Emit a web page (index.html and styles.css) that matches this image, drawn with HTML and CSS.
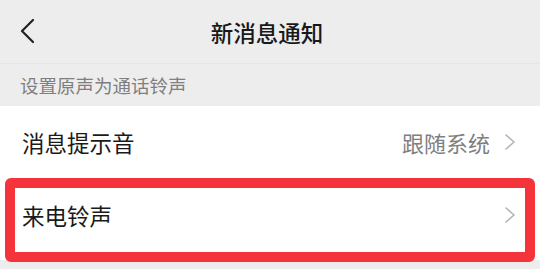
FILE: index.html
```html
<!DOCTYPE html>
<html lang="zh-CN">
<head>
  <meta charset="utf-8" />
  <link rel="stylesheet" href="styles.css">
  <title>新消息通知</title>
</head>
<body>
  <div class="header">
    <svg class="back" width="16" height="26" viewBox="0 0 16 26">
      <polyline points="14,2 3,13 14,24" fill="none" stroke="#222" stroke-width="2.2" stroke-linecap="round" stroke-linejoin="round"/>
    </svg>
    <h1 class="title">新消息通知</h1>
  </div>

  <div class="section-label">设置原声为通话铃声</div>

  <div class="list">
    <div class="row row-first">
      <span class="row-label">消息提示音</span>
      <span class="row-value">跟随系统</span>
      <svg class="arrow" width="12" height="18" viewBox="0 0 12 18">
        <polyline points="2,2 10,9 2,16" fill="none" stroke="#b2b2b2" stroke-width="1.6" stroke-linecap="round" stroke-linejoin="round"/>
      </svg>
    </div>
    <div class="row row-second">
      <span class="row-label">来电铃声</span>
      <svg class="arrow" width="12" height="18" viewBox="0 0 12 18">
        <polyline points="2,2 10,9 2,16" fill="none" stroke="#b2b2b2" stroke-width="1.6" stroke-linecap="round" stroke-linejoin="round"/>
      </svg>
      <div class="highlight"></div>
    </div>
  </div>
</body>
</html>
```

FILE: styles.css
```css
body {
  margin: 0;
  width: 540px;
  height: 269px;
  overflow: hidden;
  background: #ededed;
  font-family: "Noto Sans CJK SC", "Noto Sans", sans-serif;
}
.header {
  position: relative;
  height: 63px;
  display: flex;
  align-items: center;
  justify-content: center;
  border-bottom: 1px solid #e6e6e6;
}
.back {
  position: absolute;
  left: 19px;
  top: 18px;
}
.title {
  margin: 0;
  font-size: 22.5px;
  font-weight: 500;
  color: #191919;
  padding-right: 6px;
}
.section-label {
  height: 42px;
  display: flex;
  align-items: center;
  padding-left: 20px;
  font-size: 18.5px;
  color: #7f7f7f;
}
.list {
  background: #fff;
}
.row {
  position: relative;
  display: flex;
  align-items: center;
  padding: 0 24px 0 22px;
}
.row-first {
  height: 72px;
}
.row-second {
  height: 74px;
  padding-bottom: 8px;
}
.row-label {
  flex: 1;
  font-size: 22.5px;
  color: #1a1a1a;
}
.row-value {
  font-size: 22px;
  color: #7f7f7f;
  margin-right: 14px;
}
.arrow {
  display: block;
}
.highlight {
  position: absolute;
  left: 5px;
  right: 5px;
  top: 0;
  bottom: -2px;
  border: 10px solid #f5333a;
  border-radius: 6px;
}
```
